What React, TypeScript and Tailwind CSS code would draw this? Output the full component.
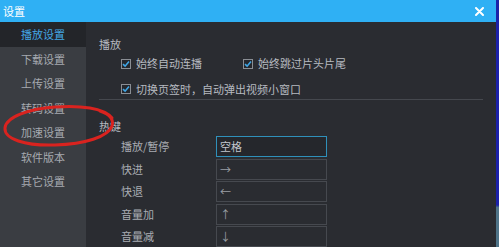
import React from 'react';

const font = { fontFamily: '"Noto Sans CJK SC", "Noto Sans", sans-serif' };

const menu = ['播放设置', '下载设置', '上传设置', '转码设置', '加速设置', '软件版本', '其它设置'];

const hotkeys = [
  { label: '播放/暂停', value: '空格', active: true },
  { label: '快进', value: '→' },
  { label: '快退', value: '←' },
  { label: '音量加', value: '↑' },
  { label: '音量减', value: '↓' },
];

function Check({ label }: { label: string }) {
  return (
    <div className="flex items-center gap-[5px]">
      <span className="w-[10px] h-[10px] border border-[#8a8e94] bg-[#25272c] flex items-center justify-center">
        <svg width="8" height="8" viewBox="0 0 8 8">
          <path d="M1 4.2 L3.1 6.2 L7 1.6" fill="none" stroke="#3fa6e6" strokeWidth="1.6" />
        </svg>
      </span>
      <span className="text-[11px] text-[#b6bac0]">{label}</span>
    </div>
  );
}

export default function App() {
  return (
    <div className="relative flex w-[499px] h-[247px] overflow-hidden" style={font}>
      {/* Window */}
      <div className="flex flex-col w-[496px] h-full">
        {/* Title bar */}
        <div className="h-[22px] bg-[#2fb0f4] flex items-center justify-between pl-[3px] pr-[12px] shrink-0">
          <span className="text-white text-[11px] leading-none">设置</span>
          <svg width="9" height="9" viewBox="0 0 9 9">
            <path d="M1 1 L8 8 M8 1 L1 8" stroke="#ffffff" strokeWidth="2" strokeLinecap="round" />
          </svg>
        </div>

        <div className="flex flex-1 min-h-0">
          {/* Sidebar */}
          <div className="w-[86px] bg-[#3a3d42] flex flex-col shrink-0">
            {menu.map((m, i) => (
              <div
                key={m}
                className={
                  i === 0
                    ? 'h-[24.5px] flex items-center justify-center text-[11px] bg-[#232529] text-[#43a7e6]'
                    : 'h-[24.5px] flex items-center justify-center text-[11px] text-[#a6aab0]'
                }
              >
                {m}
              </div>
            ))}
          </div>

          {/* Main */}
          <div className="flex-1 bg-[#2a2c31] px-[13px] flex flex-col">
            <div className="mt-[14px] h-[16px] leading-[16px] text-[11px] text-[#b6bac0]">播放</div>
            <div className="mt-[1px] h-[22px] pl-[22px] flex items-center gap-[8px]">
              <div className="w-[114px]">
                <Check label="始终自动连播" />
              </div>
              <Check label="始终跳过片头片尾" />
            </div>
            <div className="mt-[5px] h-[20px] pl-[22px] flex items-center">
              <Check label="切换页签时，自动弹出视频小窗口" />
            </div>
            <div className="h-px bg-[#45484e]" />

            <div className="mt-[18px] h-[16px] leading-[16px] text-[11px] text-[#b6bac0]">热键</div>
            <div className="mt-[2px] flex flex-col gap-[1.5px]">
              {hotkeys.map((h) => (
                <div key={h.label} className="pl-[22px] flex items-center">
                  <span className="w-[95px] text-[11px] text-[#a9adb3]">{h.label}</span>
                  <div
                    className={
                      h.active
                        ? 'w-[111px] h-[21px] border border-[#2f90ba] bg-[#25272c] flex items-center pl-[3px] text-[11px] text-[#c2c6cc]'
                        : 'w-[111px] h-[21px] border border-[#46494f] bg-[#2a2c31] flex items-center pl-[3px] text-[11px] text-[#9a9ea4]'
                    }
                  >
                    {h.value}
                  </div>
                </div>
              ))}
            </div>
          </div>
        </div>
      </div>

      {/* Desktop edge */}
      <div className="w-[3px] h-full bg-[linear-gradient(to_bottom,#1c22a8_0%,#1c22a8_83%,#4f7488_84%,#4f7488_100%)]" />

      {/* Red hand-drawn annotation */}
      <svg className="absolute left-0 top-0 pointer-events-none" width="499" height="247">
        <path
          d="M112 118 C104 108 80 105 55 107 C28 109 6 117 5 128 C4 139 25 146 55 145 C85 144 108 137 112 126 C114 120 110 114 100 111"
          fill="none"
          stroke="#d9231f"
          strokeWidth="3"
          strokeLinecap="round"
        />
      </svg>
    </div>
  );
}
